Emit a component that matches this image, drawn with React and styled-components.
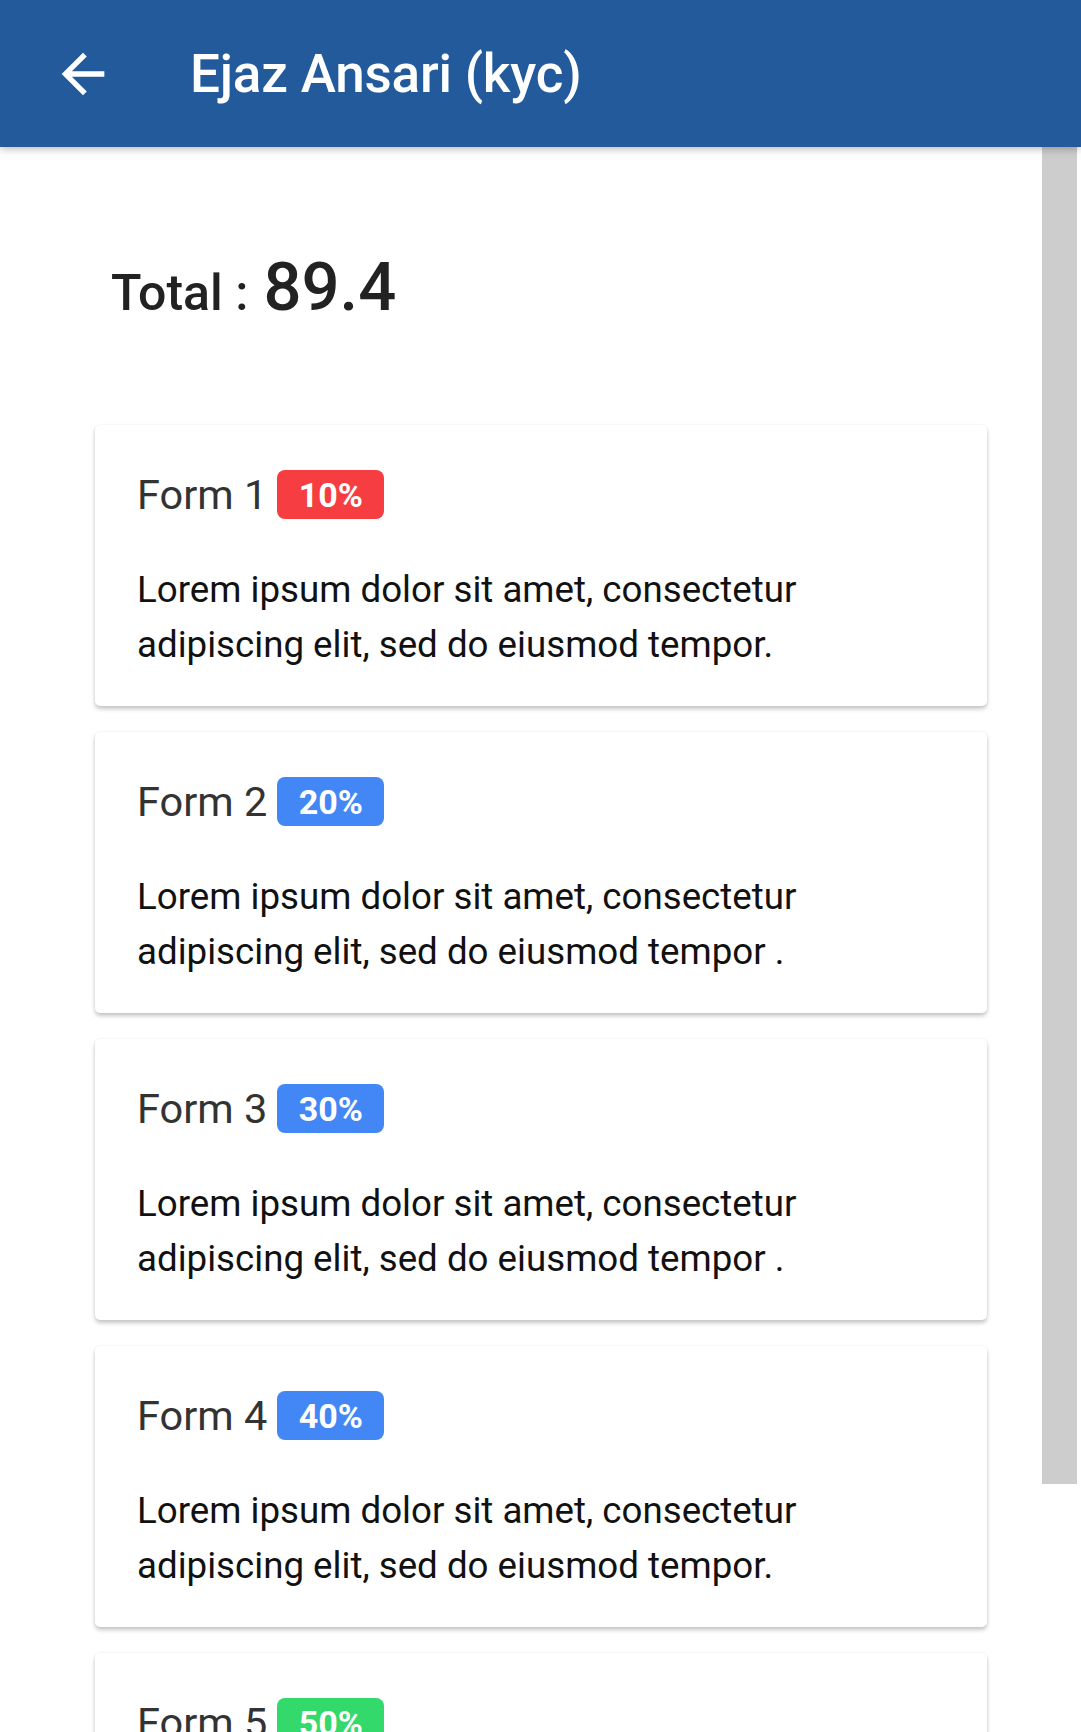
import React from 'react'
import styled, {createGlobalStyle} from 'styled-components'

const GlobalStyle = createGlobalStyle`
  html, body {
    margin: 0;
    padding: 0;
    overflow: hidden;
    background: #fff;
  }
  body {
    font-family: Roboto, 'Noto Sans', Arial, sans-serif;
  }
`

const Page = styled.div`
  display: flex;
  flex-direction: column;
  width: 1081px;
  height: 1732px;
  overflow: hidden;
`

const AppBar = styled.header`
  position: relative;
  z-index: 2;
  display: flex;
  align-items: center;
  flex: none;
  height: 147px;
  padding-left: 51px;
  background-color: #235a9c;
  box-shadow: 0 2px 8px rgba(0, 0, 0, 0.28);
  color: #fff;
`

const BackButton = styled.button`
  display: flex;
  padding: 0;
  border: 0;
  background: none;
  color: inherit;
  svg { width: 64px; height: 64px; }
`

const Title = styled.h1`
  margin: 0 0 0 75px;
  font-size: 53px;
  font-weight: 500;
  letter-spacing: -0.2px;
`

const Body = styled.div`
  display: flex;
  flex: 1;
  min-height: 0;
`

const Content = styled.main`
  flex: 1;
  padding: 107px 55px 40px 95px;
`

const Total = styled.div`
  display: flex;
  align-items: baseline;
  padding-left: 16px;
  line-height: 1;
  color: #222;
  font-weight: 500;
  font-size: 50px;
  span {
    margin-left: 15px;
    font-size: 67px;
  }
`

const CardList = styled.div`
  display: flex;
  flex-direction: column;
  gap: 26px;
  margin-top: 104px;
`

const Card = styled.section`
  height: 281px;
  box-sizing: border-box;
  padding: 45px 42px 0;
  border-radius: 5px;
  background: #fff;
  box-shadow: 0 3px 4px rgba(0, 0, 0, 0.22), 0 0 3px rgba(0, 0, 0, 0.06);
`

const CardHead = styled.div`
  display: flex;
  align-items: center;
  gap: 10px;
  color: #333;
  font-size: 41.5px;
`

const Badge = styled.span`
  display: inline-flex;
  align-items: center;
  justify-content: center;
  width: 107px;
  height: 49px;
  border-radius: 8px;
  background: ${p => p.color};
  color: #fff;
  font-size: 34px;
  font-weight: 700;
`

const Text = styled.p`
  margin: 43px 0 0;
  color: #111;
  font-size: 36.7px;
  line-height: 55px;
  width: 780px;
`

const Rail = styled.div`
  flex: none;
  width: 35px;
  margin-right: 4px;
`

const Thumb = styled.div`
  height: 1337px;
  background: #cdcdcd;
`

const forms = [
  {name: 'Form 1', pct: '10%', color: '#f63e42', text: 'Lorem ipsum dolor sit amet, consectetur adipiscing elit, sed do eiusmod tempor.'},
  {name: 'Form 2', pct: '20%', color: '#4287f5', text: 'Lorem ipsum dolor sit amet, consectetur adipiscing elit, sed do eiusmod tempor .'},
  {name: 'Form 3', pct: '30%', color: '#4287f5', text: 'Lorem ipsum dolor sit amet, consectetur adipiscing elit, sed do eiusmod tempor .'},
  {name: 'Form 4', pct: '40%', color: '#4287f5', text: 'Lorem ipsum dolor sit amet, consectetur adipiscing elit, sed do eiusmod tempor.'},
  {name: 'Form 5', pct: '50%', color: '#33d96a', text: 'Lorem ipsum dolor sit amet, consectetur adipiscing elit, sed do eiusmod tempor.'},
]

export default function App() {
  return (
    <Page>
      <GlobalStyle/>
      <AppBar>
        <BackButton aria-label="back">
          <svg viewBox="0 0 24 24" fill="currentColor">
            <path d="M20 11H7.83l5.59-5.59L12 4l-8 8 8 8 1.41-1.41L7.83 13H20v-2z"/>
          </svg>
        </BackButton>
        <Title>Ejaz Ansari (kyc)</Title>
      </AppBar>
      <Body>
        <Content>
          <Total>Total :<span>89.4</span></Total>
          <CardList>
            {forms.map(f => (
              <Card key={f.name}>
                <CardHead>
                  {f.name}
                  <Badge color={f.color}>{f.pct}</Badge>
                </CardHead>
                <Text>{f.text}</Text>
              </Card>
            ))}
          </CardList>
        </Content>
        <Rail>
          <Thumb/>
        </Rail>
      </Body>
    </Page>
  )
}
